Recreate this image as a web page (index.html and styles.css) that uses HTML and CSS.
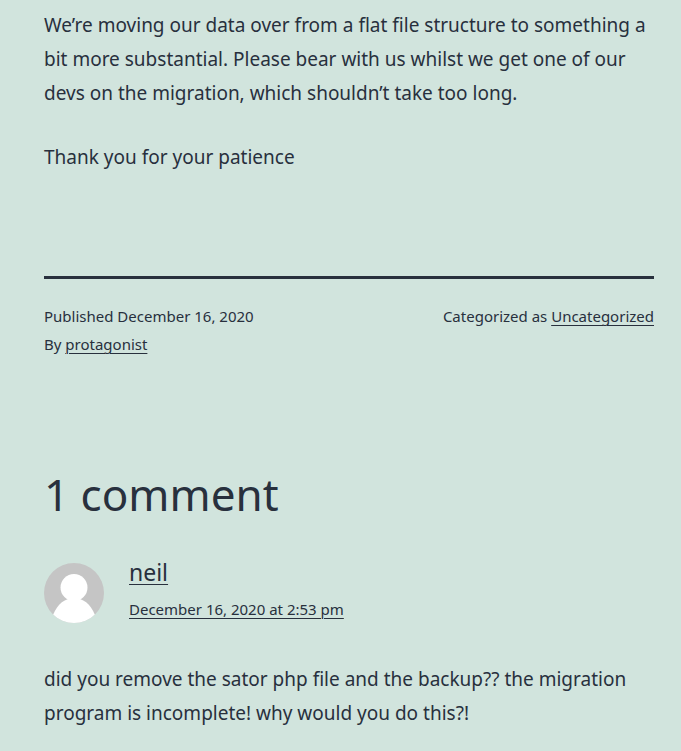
FILE: index.html
```html
<!DOCTYPE html>
<html lang="en">
<head>
<meta charset="utf-8">
<meta name="viewport" content="width=device-width, initial-scale=1">
<title>Post</title>
<link rel="stylesheet" href="styles.css">
</head>
<body>
<main class="page">
  <article>
    <div class="entry-content">
      <p>We’re moving our data over from a flat file structure to something a bit more substantial. Please bear with us whilst we get one of our devs on the migration, which shouldn’t take too long.</p>
      <p>Thank you for your patience</p>
    </div>
    <footer class="entry-footer">
      <div>
        <div>Published <time datetime="2020-12-16">December 16, 2020</time></div>
        <div>By <a href="#author">protagonist</a></div>
      </div>
      <div>Categorized as <a href="#category">Uncategorized</a></div>
    </footer>
  </article>
  <section class="comments">
    <h2 class="comments-title">1 comment</h2>
    <article class="comment">
      <header class="comment-meta">
        <svg class="avatar" viewBox="0 0 60 60" aria-hidden="true">
          <defs><clipPath id="disc"><circle cx="30" cy="30" r="30"/></clipPath></defs>
          <g clip-path="url(#disc)">
            <rect width="60" height="60" fill="#c5c5c5"/>
            <circle cx="30" cy="24.5" r="13.5" fill="#fff"/>
            <path d="M7 60C9 48 15 39 24 36H36C45 39 51 48 53 60Z" fill="#fff"/>
          </g>
        </svg>
        <div>
          <div class="comment-author"><a href="#neil">neil</a></div>
          <div class="comment-date"><a href="#comment"><time datetime="2020-12-16T14:53">December 16, 2020 at 2:53 pm</time></a></div>
        </div>
      </header>
      <p class="comment-text">did you remove the sator php file and the backup?? the migration program is incomplete! why would you do this?!</p>
    </article>
  </section>
</main>
</body>
</html>
```
FILE: styles.css
```css
body {
  margin: 0;
  background: #d1e4dd;
  color: #28303d;
  font: 19px/34px "Noto Sans", sans-serif;
}
.page {
  padding: 8px 27px 20px 44px;
}
p {
  margin: 0 0 30px;
}
a {
  color: inherit;
  text-decoration: underline;
  text-decoration-thickness: 1px;
  text-underline-offset: 3px;
}
.entry-content {
  padding-bottom: 72px;
}
.entry-footer {
  display: flex;
  justify-content: space-between;
  padding-top: 23px;
  border-top: 3px solid #28303d;
  font-size: 15px;
  line-height: 28px;
}
.comments {
  padding-top: 104px;
}
.comments-title {
  margin: 0 0 27px;
  font-size: 44px;
  line-height: 64px;
  font-weight: 400;
}
.comment-meta {
  display: flex;
  align-items: flex-start;
  gap: 25px;
}
.avatar {
  width: 60px;
  height: 60px;
  margin-top: 10px;
}
.comment-author {
  font-size: 23px;
  line-height: 38px;
}
.comment-date {
  font-size: 15px;
  line-height: 36px;
}
.comment-text {
  margin: 35px 0 0;
}
```
